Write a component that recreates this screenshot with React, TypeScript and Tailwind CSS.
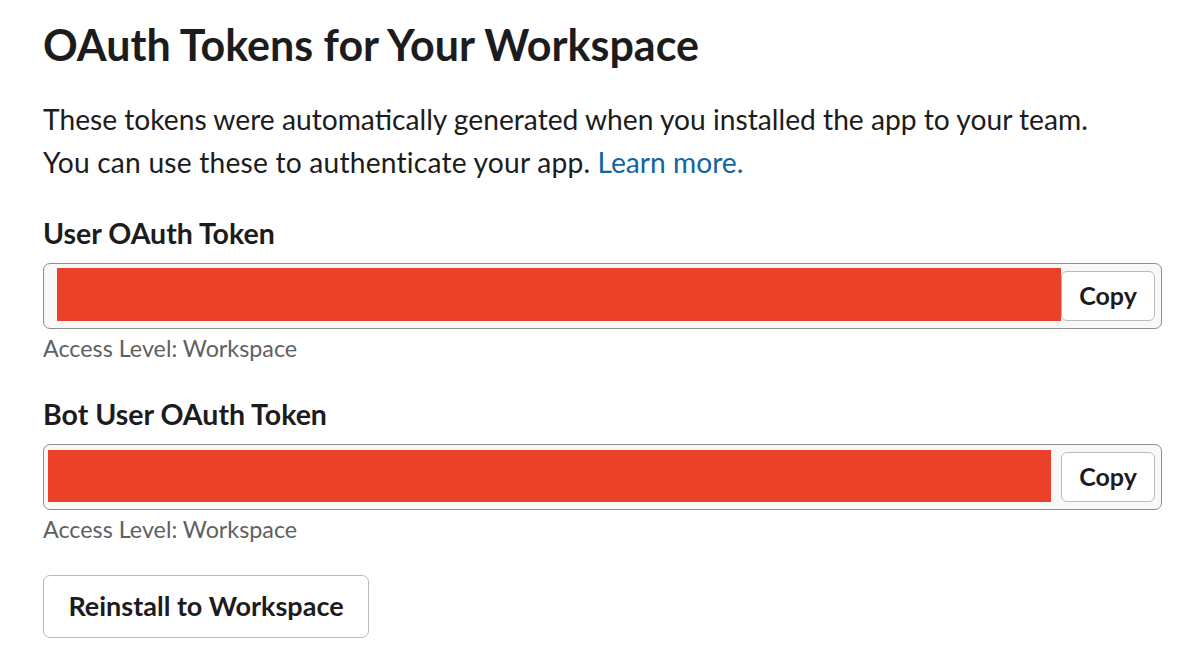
const font = { fontFamily: 'Lato, "Noto Sans", sans-serif' };

function TokenField({ label, redClass }: { label: string; redClass: string }) {
  return (
    <section className="flex flex-col">
      <h3 className="text-[28.5px] font-bold leading-[34px] text-[#1d1c1d]">{label}</h3>
      <div className="mt-[13px] flex h-[66px] w-[1119px] items-start rounded-[7px] border border-[#8d8d8d] bg-[#f8f8f8]">
        <div className={redClass} />
        <button className="ml-auto mr-[6px] mt-[7px] h-[50px] w-[94px] rounded-[6px] border border-[#bbbbbb] bg-white text-[25px] font-bold text-[#1d1c1d]">
          Copy
        </button>
      </div>
      <p className="mt-[4px] text-[23.3px] leading-[30px] text-[#616061]">Access Level: Workspace</p>
    </section>
  );
}

export default function App() {
  return (
    <div style={font} className="min-h-screen bg-white pl-[43px] pt-[19px] text-[#1d1c1d]">
      <h1 className="text-[43px] font-bold leading-[52px]">OAuth Tokens for Your Workspace</h1>
      <p className="mt-[27px] text-[28.2px] leading-[43px]">
        These tokens were automatically generated when you installed the app to your team.
        <br />
        <span className="tracking-[0.2px]">You can use these to authenticate your app.</span>{' '}
        <a className="text-[#1264a3]">Learn more.</a>
      </p>
      <div className="mt-[32px] flex flex-col gap-[34px]">
        <TokenField label="User OAuth Token" redClass="ml-[13px] mt-[4px] h-[53px] w-[1004px] bg-[#ea4128]" />
        <TokenField label="Bot User OAuth Token" redClass="ml-[4px] mt-[5px] h-[52px] w-[1003px] bg-[#ea4128]" />
      </div>
      <button className="mt-[31px] h-[63px] w-[326px] rounded-[7px] border border-[#bbbbbb] bg-white text-[27px] font-bold text-[#1d1c1d]">
        Reinstall to Workspace
      </button>
    </div>
  );
}
